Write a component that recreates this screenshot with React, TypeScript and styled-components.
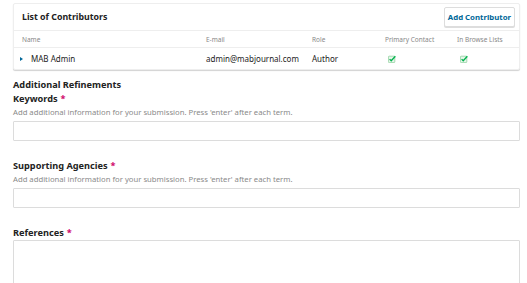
import React from "react";
import styled, { createGlobalStyle } from "styled-components";

const GlobalStyle = createGlobalStyle`
  html, body {
    margin: 0;
    padding: 0;
    background: #fff;
    font-family: "Noto Sans", "Open Sans", sans-serif;
    color: #222;
  }
`;

const Page = styled.div`
  padding: 3px 7px 0 13px;
  width: 507px;
`;

const Panel = styled.section`
  border: 1px solid #eeeeee;
  border-radius: 2px;
  box-shadow: 0 1px 1px rgba(0, 0, 0, 0.18);
  background: #fff;
`;

const PanelHeader = styled.header`
  display: flex;
  align-items: center;
  justify-content: space-between;
  height: 26px;
  padding: 0 4px 0 8px;
  border-bottom: 1px solid #eeeeee;
`;

const PanelTitle = styled.h2`
  margin: 0 0 1px;
  font-size: 8.8px;
  font-weight: 700;
  color: #222;
`;

const AddButton = styled.button`
  font-family: inherit;
  font-size: 7.8px;
  font-weight: 700;
  color: #006798;
  background: #fff;
  border: 1px solid #dddddd;
  border-radius: 2px;
  box-shadow: 0 1px 0 #dddddd;
  height: 20px;
  padding: 0 3px;
  cursor: pointer;
`;

const Grid = styled.div`
  display: grid;
  grid-template-columns: 192px 106px 73px 72px 1fr;
`;

const HeadRow = styled(Grid)`
  height: 16px;
  align-items: center;
  border-bottom: 1px solid #eeeeee;
  font-size: 6.5px;
  color: #888;
`;

const BodyRow = styled(Grid)`
  height: 21px;
  align-items: center;
  font-size: 8px;
  color: #222;
`;

const Cell = styled.div<{ $first?: boolean }>`
  padding-left: ${(p) => (p.$first ? "8px" : "0")};
  display: flex;
  align-items: center;
  white-space: nowrap;
`;

const Caret = styled.span`
  width: 0;
  height: 0;
  border-top: 2.5px solid transparent;
  border-bottom: 2.5px solid transparent;
  border-left: 3.5px solid #006798;
  margin: 0 8px 0 -2px;
`;

const Check = styled.svg`
  width: 8px;
  height: 8px;
  margin-left: 3px;
`;

const Section = styled.div`
  margin-top: 8px;
`;

const SectionTitle = styled.h3`
  margin: 0;
  font-size: 9.2px;
  font-weight: 700;
  line-height: 14px;
  color: #222;
`;

const Field = styled.div<{ $gap?: number }>`
  margin-top: ${(p) => p.$gap ?? 0}px;
`;

const Label = styled.div`
  font-size: 9.2px;
  font-weight: 700;
  line-height: 14px;
  color: #222;
`;

const Required = styled.span`
  color: #d00a6c;
  margin-left: 3px;
`;

const Help = styled.div`
  font-size: 7.7px;
  color: #8a8a8a;
  line-height: 12px;
  margin-bottom: 3px;
`;

const Input = styled.div`
  height: 18px;
  border: 1px solid #dcdcdc;
  border-radius: 1px;
  background: #fff;
`;

const TextArea = styled.div`
  height: 60px;
  border: 1px solid #dcdcdc;
  border-radius: 1px;
  background: #fff;
`;

const CheckIcon = () => (
  <Check viewBox="0 0 10 10">
    <rect x="0.5" y="1.5" width="8" height="8" rx="1" fill="#e7f6ea" stroke="#8fd19e" />
    <path d="M2 5.2 L4 7.2 L9.2 1.6" fill="none" stroke="#00b24e" strokeWidth="1.6" />
  </Check>
);

const contributors = [
  { name: "MAB Admin", email: "admin@mabjournal.com", role: "Author", primary: true, browse: true },
];

export default function App() {
  return (
    <Page>
      <GlobalStyle />
      <Panel>
        <PanelHeader>
          <PanelTitle>List of Contributors</PanelTitle>
          <AddButton>Add Contributor</AddButton>
        </PanelHeader>
        <HeadRow>
          <Cell $first>Name</Cell>
          <Cell>E-mail</Cell>
          <Cell>Role</Cell>
          <Cell>Primary Contact</Cell>
          <Cell>In Browse Lists</Cell>
        </HeadRow>
        {contributors.map((c) => (
          <BodyRow key={c.email}>
            <Cell $first>
              <Caret />
              {c.name}
            </Cell>
            <Cell>{c.email}</Cell>
            <Cell>{c.role}</Cell>
            <Cell>{c.primary && <CheckIcon />}</Cell>
            <Cell>{c.browse && <CheckIcon />}</Cell>
          </BodyRow>
        ))}
      </Panel>

      <Section>
        <SectionTitle>Additional Refinements</SectionTitle>
        <Field>
          <Label>
            Keywords<Required>*</Required>
          </Label>
          <Help>Add additional information for your submission. Press 'enter' after each term.</Help>
          <Input />
        </Field>
        <Field $gap={18}>
          <Label>
            Supporting Agencies<Required>*</Required>
          </Label>
          <Help>Add additional information for your submission. Press 'enter' after each term.</Help>
          <Input />
        </Field>
        <Field $gap={18}>
          <Label>
            References<Required>*</Required>
          </Label>
          <TextArea />
        </Field>
      </Section>
    </Page>
  );
}
